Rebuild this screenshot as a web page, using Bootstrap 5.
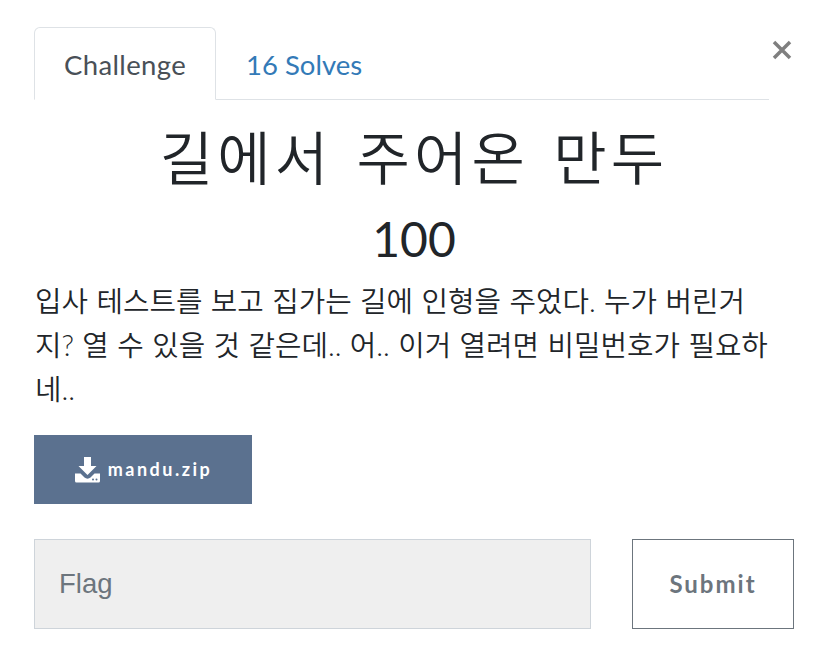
<!DOCTYPE html>
<html lang="ko">
<head>
<meta charset="utf-8">
<title>Challenge</title>
<link href="https://cdn.jsdelivr.net/npm/bootstrap@5.3.0/dist/css/bootstrap.min.css" rel="stylesheet">
<style>
body { font-family: Lato, "Noto Sans CJK KR", sans-serif; color: #212529; background: #fff; }
.chal-wrap { padding: 27px 26px 0 34px; }
.top-row { display: flex; align-items: flex-start; }
.chal-tabs { flex: 1 1 auto; border-bottom: 1px solid #dee2e6; height: 73px; }
.chal-tabs .nav-link { font-size: 27.500px; font-weight: 400; line-height: 38px; padding: 18px 30px 16px 29px; height: 73px; border: 1px solid transparent; border-radius: 6px 6px 0 0; color: #337ab7; }
.chal-tabs .nav-link.active { color: #495057; background: #fff; border-color: #dee2e6 #dee2e6 #fff; padding: 18px 29px 16px; letter-spacing: .36px; }
.x-btn { flex: 0 0 25px; width: 25px; height: 25px; margin-top: 10px; padding: 0; border: 0; background: none; display: flex; align-items: center; justify-content: center; }
.chal-title { font-size: 58px; font-weight: 350; line-height: 67px; text-align: center; margin: 24px 0 0; letter-spacing: 4.100px; word-spacing: 4.500px; }
.chal-value { font-size: 48px; font-weight: 400; line-height: 58px; text-align: center; margin: 19px 0 0; }
.chal-desc { font-size: 28.800px; font-weight: 350; line-height: 44px; margin: 11px 0 0; padding: 0 22px 0 1px; word-spacing: .6px; }
.dl-btn { width: 218px; height: 69px; margin-top: 24px; background: #5b718f; color: #fff; border: 0; border-radius: 0; display: flex; align-items: center; justify-content: center; gap: 7px; font-size: 18px; font-weight: 700; letter-spacing: 2.500px; text-decoration: none; }
.dl-btn:hover { background: #5b718f; color: #fff; }
.flag-row { display: flex; justify-content: space-between; margin-top: 35px; }
.flag-input { width: 557px; height: 90px; background: #efefef; border: 1px solid #ced4da; border-radius: 0; font-family: "Liberation Sans", Arial, sans-serif; font-size: 27.500px; padding: 0 24px; }
.flag-input::placeholder { color: #6c757d; opacity: 1; }
.sub-btn { width: 162px; height: 90px; border: 1px solid #6c757d; border-radius: 0; background: #fff; color: #6c757d; font-size: 24px; font-weight: 700; letter-spacing: 2px; }
</style>
</head>
<body>
<div class="chal-wrap">
  <div class="top-row">
    <ul class="nav chal-tabs">
      <li class="nav-item"><a class="nav-link active" href="#">Challenge</a></li>
      <li class="nav-item"><a class="nav-link" href="#">16 Solves</a></li>
    </ul>
    <button class="x-btn" type="button" aria-label="Close">
      <svg width="20" height="20" viewBox="0 0 20 20"><path d="M2 2 L18 18 M18 2 L2 18" stroke="#7f7f7f" stroke-width="3.500"/></svg>
    </button>
  </div>
  <h1 class="chal-title">길에서 주어온 만두</h1>
  <h2 class="chal-value">100</h2>
  <p class="chal-desc">입사 테스트를 보고 집가는 길에 인형을 주었다. 누가 버린거지? 열 수 있을 것 같은데.. 어.. 이거 열려면 비밀번호가 필요하네..</p>
  <a class="btn dl-btn" href="#">
    <svg width="27" height="27" viewBox="0 0 27 27"><path fill="#fff" d="M10 1h7v9h5.500L13.500 19 4.500 10H10z"/><path fill="#fff" d="M1 17.500h5.500l4 4c1.700 1.500 4.300 1.500 6 0l4-4H26v7.500a1.500 1.500 0 0 1-1.500 1.500h-22A1.500 1.500 0 0 1 1 25z"/><circle cx="19" cy="23.500" r="1" fill="#5b718f"/><circle cx="22.500" cy="23.500" r="1" fill="#5b718f"/></svg>
    <span>mandu.zip</span>
  </a>
  <form class="flag-row">
    <input class="form-control flag-input" type="text" placeholder="Flag">
    <button class="btn sub-btn" type="button">Submit</button>
  </form>
</div>
<script src="https://cdn.jsdelivr.net/npm/bootstrap@5.3.0/dist/js/bootstrap.bundle.min.js"></script>
</body>
</html>
